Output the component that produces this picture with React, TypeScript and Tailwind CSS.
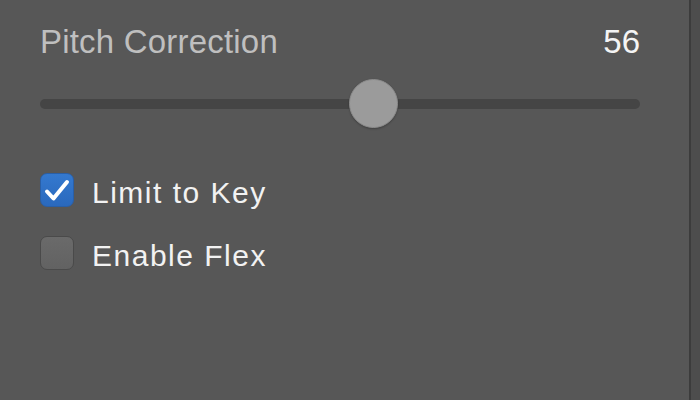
import React from 'react';

const Checkbox: React.FC<{ checked: boolean }> = ({ checked }) =>
  checked ? (
    <div className="w-[34px] h-[34px] rounded-[7px] bg-gradient-to-b from-[#3479cf] to-[#2a69bd] border border-[#2a5fa6] flex-shrink-0">
      <svg width="34" height="34" viewBox="0 0 34 34" className="-m-px">
        <path d="M7 18.5 L13.5 25.5 L27 9" fill="none" stroke="#ffffff" strokeWidth="4" strokeLinecap="round" strokeLinejoin="round" />
      </svg>
    </div>
  ) : (
    <div className="w-[34px] h-[34px] rounded-[7px] bg-gradient-to-b from-[#6a6a6a] to-[#626262] border border-[#4a4a4a] flex-shrink-0" />
  );

const App: React.FC = () => {
  const value = 56;

  return (
    <div className="w-[700px] h-[400px] flex bg-[#4d4d4d] font-['Liberation_Sans',Arial,sans-serif]">
      <div className="w-[691px] h-full bg-[#575757] border-r-2 border-[#3c3c3c] pl-[40px] pr-[49px] pt-[22px]">
        {/* Slider header */}
        <div className="flex items-center justify-between leading-[40px]">
          <span className="text-[33px] text-[#bfbfbf] tracking-[0.2px]">Pitch Correction</span>
          <span className="text-[33px] text-[#f4f4f4]">{value}</span>
        </div>

        {/* Slider */}
        <div className="relative h-[50px] mt-[17px] flex items-center">
          <div className="w-full h-[10px] rounded-full bg-[#454545]" />
          <div className="absolute left-[309px] top-0 w-[49px] h-[49px] rounded-full bg-[#9b9b9b] border border-[#8c8c8c] shadow-[0_1px_2px_rgba(0,0,0,0.25)]" />
        </div>

        {/* Options */}
        <div className="flex flex-col gap-[29px] mt-[44px]">
          <label className="flex items-center gap-[18px] h-[34px]">
            <Checkbox checked />
            <span className="relative top-[3px] text-[30px] text-[#f2f2f2] tracking-[1.5px] leading-[34px]">Limit to Key</span>
          </label>
          <label className="flex items-center gap-[18px] h-[34px]">
            <Checkbox checked={false} />
            <span className="relative top-[3px] text-[30px] text-[#f2f2f2] tracking-[1.5px] leading-[34px]">Enable Flex</span>
          </label>
        </div>
      </div>
    </div>
  );
};

export default App;
